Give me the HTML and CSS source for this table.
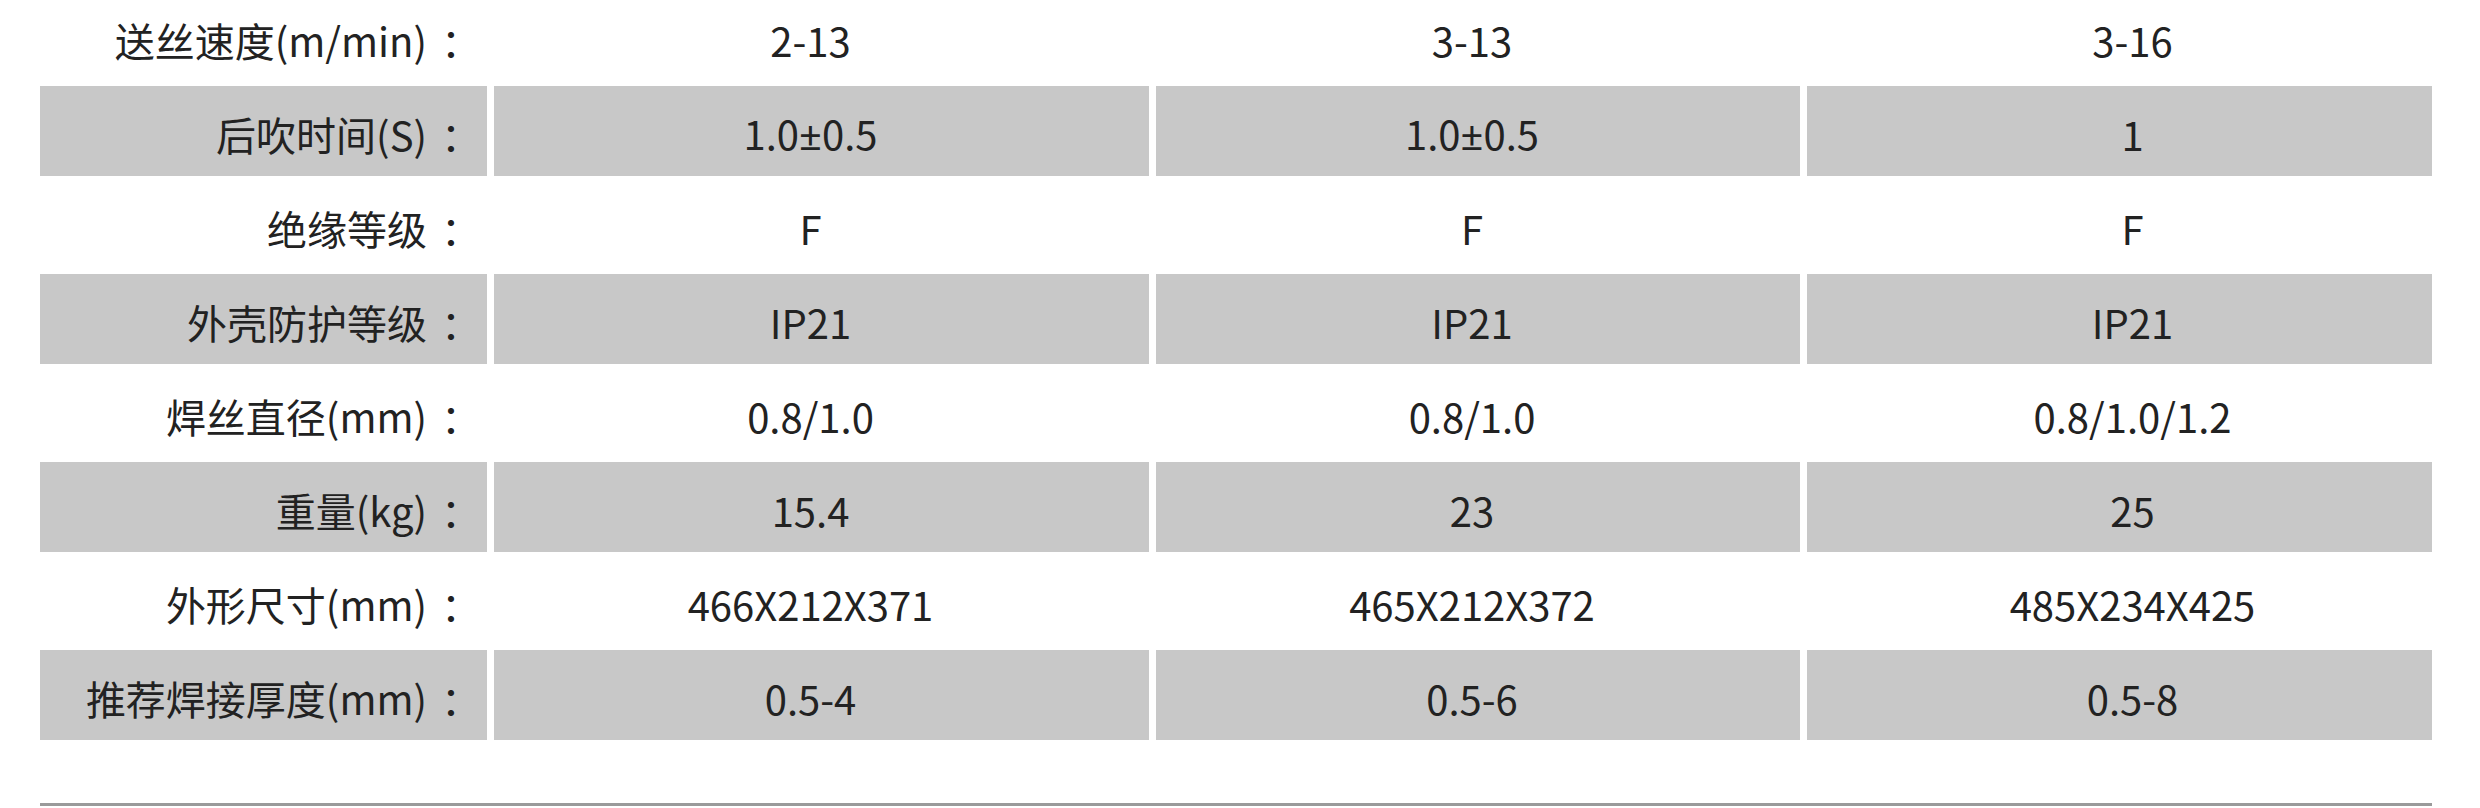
FILE: index.html
```html
<!DOCTYPE html>
<html lang="zh-CN">
<head>
    <meta charset="UTF-8">
    <meta name="viewport" content="width=device-width, initial-scale=1.0">
    <title>焊机技术参数</title>
    <link rel="stylesheet" href="styles.css">
</head>
<body>
    <div class="spec-wrap">
        <table class="spec-table">
            <colgroup>
                <col class="col-label">
                <col class="col-a">
                <col class="col-b">
                <col class="col-c">
            </colgroup>
            <tbody>
                <tr>
                    <th>送丝速度(m/min)<span class="colon">：</span></th>
                    <td>2-13</td>
                    <td>3-13</td>
                    <td>3-16</td>
                </tr>
                <tr class="shade">
                    <th>后吹时间(S)<span class="colon">：</span></th>
                    <td>1.0<span class="pm">±</span>0.5</td>
                    <td>1.0<span class="pm">±</span>0.5</td>
                    <td>1</td>
                </tr>
                <tr>
                    <th>绝缘等级<span class="colon">：</span></th>
                    <td>F</td>
                    <td>F</td>
                    <td>F</td>
                </tr>
                <tr class="shade">
                    <th>外壳防护等级<span class="colon">：</span></th>
                    <td>IP21</td>
                    <td>IP21</td>
                    <td>IP21</td>
                </tr>
                <tr>
                    <th>焊丝直径(mm)<span class="colon">：</span></th>
                    <td>0.8/1.0</td>
                    <td>0.8/1.0</td>
                    <td>0.8/1.0/1.2</td>
                </tr>
                <tr class="shade">
                    <th>重量(kg)<span class="colon">：</span></th>
                    <td>15.4</td>
                    <td>23</td>
                    <td>25</td>
                </tr>
                <tr>
                    <th>外形尺寸(mm)<span class="colon">：</span></th>
                    <td>466X212X371</td>
                    <td>465X212X372</td>
                    <td>485X234X425</td>
                </tr>
                <tr class="shade">
                    <th>推荐焊接厚度(mm)<span class="colon">：</span></th>
                    <td>0.5-4</td>
                    <td>0.5-6</td>
                    <td>0.5-8</td>
                </tr>
            </tbody>
        </table>

        <div class="spec-rule"></div>
    </div>
</body>
</html>
```

FILE: styles.css
```css
* {
    margin: 0;
    padding: 0;
    box-sizing: border-box;
}

body {
    font-family: "Noto Sans CJK SC", "Noto Sans", sans-serif;
    background: #fff;
    color: #222;
    overflow: hidden;
}

.spec-wrap {
    width: 2480px;
    height: 808px;
    padding-top: 1px;
}

/* table starts a little above the window, first row is cut */
.spec-table {
    border-collapse: separate;
    border-spacing: 7px 4px;
    table-layout: fixed;
    margin: -13px 0 0 33px;
    font-size: 40px;
    line-height: 1.2;
}

.col-label { width: 447px; }
.col-a { width: 655px; }
.col-b { width: 644px; }
.col-c { width: 625px; }

.spec-table th,
.spec-table td {
    height: 90px;
    font-weight: 400;
    vertical-align: middle;
    white-space: nowrap;
    padding-top: 6px;
}

.spec-table th {
    text-align: right;
    padding-right: 6px;
}

.spec-table td {
    text-align: center;
}

.spec-table td:nth-child(2) {
    padding-right: 22px;
}

.spec-table td:nth-child(3) {
    padding-right: 12px;
}

.spec-table td:nth-child(4) {
    padding-left: 26px;
}

.colon {
    margin-left: 14px;
    font-family: "Noto Sans CJK TC", sans-serif;
}

.pm {
    font-family: "Noto Sans", sans-serif;
}

.shade th,
.shade td {
    background: #c8c8c8;
}

.spec-rule {
    height: 3px;
    margin: 59px 0 0 40px;
    width: 2392px;
    background: #9a9a9a;
}
```
